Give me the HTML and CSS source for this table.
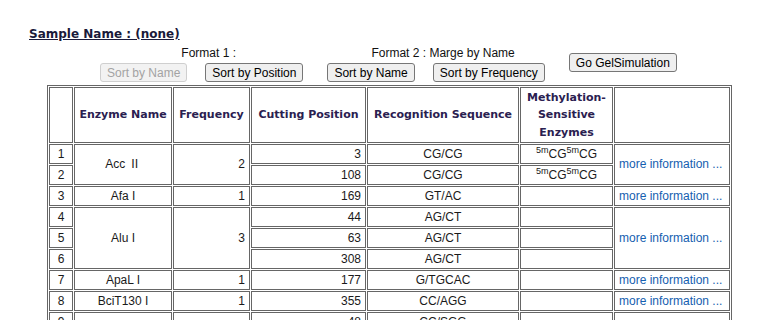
FILE: index.html
```html
<!DOCTYPE html>
<html lang="ja">
<head>
    <meta charset="UTF-8">
    <meta name="viewport" content="width=device-width, initial-scale=1.0">
    <title>Restriction Enzyme Map</title>
    <link rel="stylesheet" href="styles.css">
</head>
<body>
    <div class="page">
        <h2 class="sample-name">Sample Name : (none)</h2>

        <div class="controls">
            <div class="format-group">
                <div class="format-label">Format 1 :</div>
                <div class="format-buttons">
                    <button type="button" class="btn" disabled>Sort by Name</button>
                    <button type="button" class="btn">Sort by Position</button>
                </div>
            </div>
            <div class="format-group">
                <div class="format-label">Format 2 : Marge by Name</div>
                <div class="format-buttons">
                    <button type="button" class="btn">Sort by Name</button>
                    <button type="button" class="btn">Sort by Frequency</button>
                </div>
            </div>
            <button type="button" class="btn btn-gel">Go GelSimulation</button>
        </div>

        <table class="result-table">
            <thead>
                <tr>
                    <th class="col-no"></th>
                    <th class="col-name">Enzyme Name</th>
                    <th class="col-freq">Frequency</th>
                    <th class="col-pos">Cutting Position</th>
                    <th class="col-seq">Recognition Sequence</th>
                    <th class="col-meth">Methylation-<br>Sensitive<br>Enzymes</th>
                    <th></th>
                </tr>
            </thead>
            <tbody>
                <tr>
                    <td class="no">1</td>
                    <td class="name" rowspan="2">Acc Ⅱ</td>
                    <td class="num" rowspan="2">2</td>
                    <td class="num">3</td>
                    <td class="seq">CG/CG</td>
                    <td class="seq"><sup>5m</sup>CG<sup>5m</sup>CG</td>
                    <td class="info" rowspan="2"><a href="#">more information ...</a></td>
                </tr>
                <tr>
                    <td class="no">2</td>
                    <td class="num">108</td>
                    <td class="seq">CG/CG</td>
                    <td class="seq"><sup>5m</sup>CG<sup>5m</sup>CG</td>
                </tr>
                <tr>
                    <td class="no">3</td>
                    <td class="name">Afa I</td>
                    <td class="num">1</td>
                    <td class="num">169</td>
                    <td class="seq">GT/AC</td>
                    <td class="seq"></td>
                    <td class="info"><a href="#">more information ...</a></td>
                </tr>
                <tr>
                    <td class="no">4</td>
                    <td class="name" rowspan="3">Alu I</td>
                    <td class="num" rowspan="3">3</td>
                    <td class="num">44</td>
                    <td class="seq">AG/CT</td>
                    <td class="seq"></td>
                    <td class="info" rowspan="3"><a href="#">more information ...</a></td>
                </tr>
                <tr>
                    <td class="no">5</td>
                    <td class="num">63</td>
                    <td class="seq">AG/CT</td>
                    <td class="seq"></td>
                </tr>
                <tr>
                    <td class="no">6</td>
                    <td class="num">308</td>
                    <td class="seq">AG/CT</td>
                    <td class="seq"></td>
                </tr>
                <tr>
                    <td class="no">7</td>
                    <td class="name">ApaL I</td>
                    <td class="num">1</td>
                    <td class="num">177</td>
                    <td class="seq">G/TGCAC</td>
                    <td class="seq"></td>
                    <td class="info"><a href="#">more information ...</a></td>
                </tr>
                <tr>
                    <td class="no">8</td>
                    <td class="name">BciT130 I</td>
                    <td class="num">1</td>
                    <td class="num">355</td>
                    <td class="seq">CC/AGG</td>
                    <td class="seq"></td>
                    <td class="info"><a href="#">more information ...</a></td>
                </tr>
                <tr>
                    <td class="no">9</td>
                    <td class="name" rowspan="2">Bcn I</td>
                    <td class="num" rowspan="2">2</td>
                    <td class="num">48</td>
                    <td class="seq">CC/SGG</td>
                    <td class="seq"></td>
                    <td class="info" rowspan="2"><a href="#">more information ...</a></td>
                </tr>
                <tr>
                    <td class="no">10</td>
                    <td class="num">97</td>
                    <td class="seq">CC/SGG</td>
                    <td class="seq"></td>
                </tr>
            </tbody>
        </table>
    </div>
</body>
</html>
```

FILE: styles.css
```css
body {
    margin: 0;
    padding: 0;
    background-color: #fff;
    font-family: 'Liberation Sans', 'Noto Sans CJK JP', Arial, sans-serif;
    font-size: 12px;
    color: #1a1a1a;
}

.page {
    padding: 27px 0 0 29px;
}

.sample-name {
    margin: 0;
    font-family: 'DejaVu Sans', sans-serif;
    font-size: 12px;
    line-height: 14px;
    font-weight: bold;
    color: #1a1a3a;
    text-decoration: underline;
}

/* sort / format buttons */
.controls {
    display: flex;
    align-items: flex-start;
    margin: 5px 0 0 71px;
}

.format-group {
    display: flex;
    flex-direction: column;
    align-items: center;
    margin-right: 24px;
}

.format-label {
    padding-left: 14px;
    line-height: 14px;
    margin-bottom: 3px;
    color: #111;
}

.format-buttons {
    display: flex;
    gap: 18px;
}

.btn {
    height: 19px;
    padding: 0 6px;
    font-family: 'Liberation Sans', Arial, sans-serif;
    font-size: 12px;
    color: #000;
    background-color: #efefef;
    border: 1px solid #767676;
    border-radius: 3px;
    cursor: pointer;
}

.btn:disabled {
    color: #a3a3a3;
    background-color: #f2f2f2;
    border-color: #cfcfcf;
    cursor: default;
}

.btn-gel {
    margin-top: 7px;
}

/* enzyme table */
.result-table {
    width: 685px;
    margin: 3px 0 0 18px;
    table-layout: fixed;
    border-collapse: separate;
    border-spacing: 1px;
    border: 1px solid #666;
}

.result-table th,
.result-table td {
    box-sizing: border-box;
    border: 1px solid #666;
}

.result-table th {
    padding: 1px 2px;
    font-family: 'DejaVu Sans', sans-serif;
    font-size: 11px;
    line-height: 17.33px;
    font-weight: bold;
    color: #2a2050;
    white-space: nowrap;
}

.col-no { width: 24px; }
.col-name { width: 98px; }
.col-freq { width: 77px; }
.col-pos { width: 115px; }
.col-seq { width: 152px; }
.col-meth { width: 93px; }

.result-table td {
    padding: 1px 4px;
    line-height: 16px;
    white-space: nowrap;
}

.no,
.name,
.seq {
    text-align: center;
}

.name {
    font-family: 'Liberation Sans', 'Noto Sans CJK JP', sans-serif;
}

.num {
    text-align: right;
}

.seq sup {
    font-size: 9px;
    line-height: 0;
}

.info a {
    color: #1560b0;
    text-decoration: none;
}
```
